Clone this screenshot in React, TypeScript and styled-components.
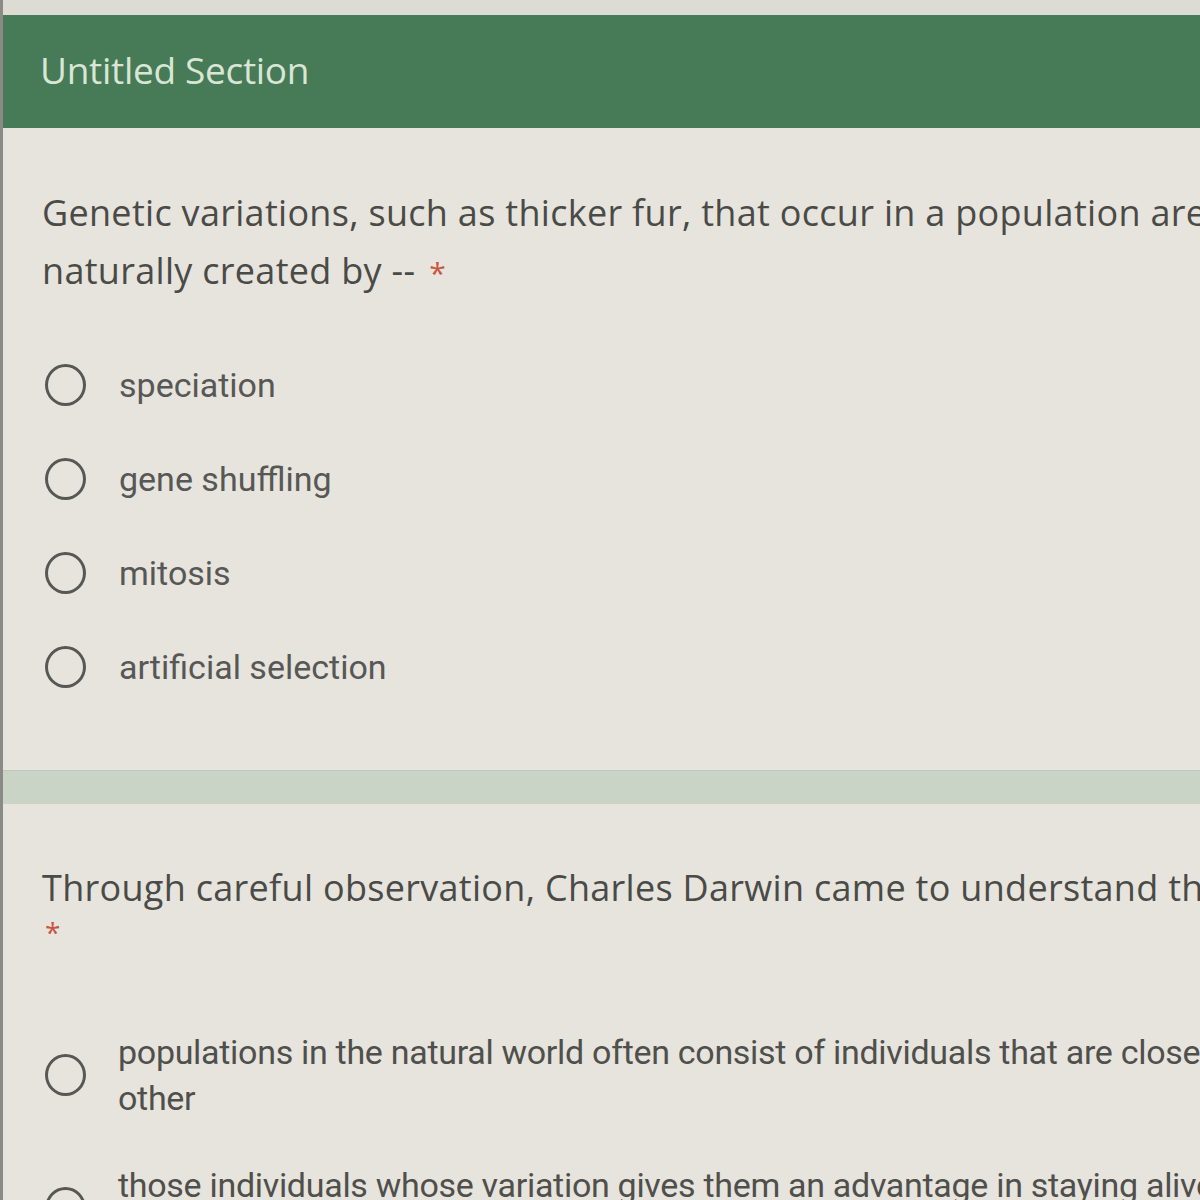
import React from "react";
import styled, { createGlobalStyle } from "styled-components";

const Global = createGlobalStyle`
  html, body { margin: 0; padding: 0; background: #dedcd5; }
  body { width: 1200px; height: 1200px; overflow: hidden; }
`;

const Page = styled.div`
  width: 1200px;
  height: 1200px;
  overflow: hidden;
  background: #e4e2db;
  display: flex;
  flex-direction: column;
  border-left: 3px solid #8a8a86;
  box-sizing: border-box;
`;

const TopStrip = styled.div`
  height: 15px;
  background: #dcdbd4;
  flex: none;
`;

const Header = styled.div`
  height: 113px;
  flex: none;
  background: #477a57;
  display: flex;
  align-items: center;
  padding-left: 37px;
  padding-bottom: 4px;
  box-sizing: border-box;
  font-family: "Open Sans", sans-serif;
  font-size: 37px;
  color: #d9e6d6;
  letter-spacing: -0.3px;
`;

const Card = styled.div<{ $h: number }>`
  height: ${(p) => p.$h}px;
  flex: none;
  background: #e6e4dd;
  padding: 0 0 0 39px;
  display: flex;
  flex-direction: column;
  overflow: hidden;
`;

const Question = styled.div<{ $top: number }>`
  margin-top: ${(p) => p.$top}px;
  font-family: "Open Sans", sans-serif;
  font-size: 36px;
  line-height: 58px;
  color: #4a4a47;
  white-space: pre;
  letter-spacing: 0.3px;
`;

const Star = styled.span`
  color: #c9543f;
  font-size: 30px;
  margin-left: 14px;
`;

const StarLine = styled.div`
  font-family: "Open Sans", sans-serif;
  font-size: 28px;
  line-height: 30px;
  color: #c9543f;
  padding-left: 3px;
`;

const Options = styled.div<{ $top: number; $gap: number }>`
  margin-top: ${(p) => p.$top}px;
  display: flex;
  flex-direction: column;
  gap: ${(p) => p.$gap}px;
`;

const Option = styled.div`
  display: flex;
  align-items: center;
  height: 48px;
`;

const Radio = styled.div<{ $top?: number }>`
  width: 35px;
  height: 36px;
  border: 3.5px solid #575754;
  border-radius: 50%;
  flex: none;
  margin-left: 3px;
  margin-top: ${(p) => p.$top ?? 0}px;
`;

const OptionText = styled.div`
  margin-left: 33px;
  font-family: Roboto, sans-serif;
  font-size: 34px;
  color: #575755;
  white-space: nowrap;
`;

const LongOption = styled.div`
  display: flex;
  align-items: flex-start;
`;

const LongText = styled.div`
  margin-left: 32px;
  font-family: Roboto, sans-serif;
  font-size: 34px;
  line-height: 46px;
  color: #4f4f4c;
  white-space: pre;
  letter-spacing: -0.3px;
`;

const Band = styled.div`
  height: 33px;
  flex: none;
  background: #c9d4c6;
  border-top: 1px solid #bccabb;
`;

export default function App() {
  return (
    <>
      <Global />
      <Page>
        <TopStrip />
        <Header>Untitled Section</Header>
        <Card $h={642}>
          <Question $top={56}>
            {"Genetic variations, such as thicker fur, that occur in a population are\nnaturally created by --"}
            <Star>*</Star>
          </Question>
          <Options $top={59} $gap={46}>
            {["speciation", "gene shuffling", "mitosis", "artificial selection"].map((t) => (
              <Option key={t}>
                <Radio />
                <OptionText>{t}</OptionText>
              </Option>
            ))}
          </Options>
        </Card>
        <Band />
        <Card $h={400}>
          <Question $top={55}>
            {"Through careful observation, Charles Darwin came to understand that"}
          </Question>
          <StarLine>*</StarLine>
          <Options $top={82} $gap={41}>
            <LongOption>
              <Radio $top={25} />
              <LongText>
                {"populations in the natural world often consist of individuals that are close to each\nother"}
              </LongText>
            </LongOption>
            <LongOption>
              <Radio $top={25} />
              <LongText>
                {"those individuals whose variation gives them an advantage in staying alive"}
              </LongText>
            </LongOption>
          </Options>
        </Card>
      </Page>
    </>
  );
}
